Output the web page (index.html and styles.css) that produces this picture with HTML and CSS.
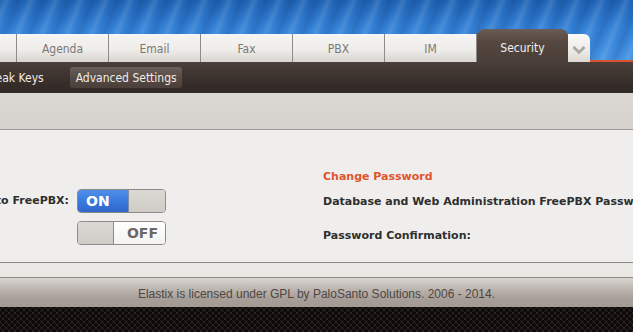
FILE: index.html
```html
<!DOCTYPE html>
<html>
<head>
<meta charset="utf-8">
<link rel="stylesheet" href="styles.css">
</head>
<body>
<div class="page">
  <div class="top">
    <div class="tab tab-cut"></div>
    <div class="tab">Agenda</div>
    <div class="tab">Email</div>
    <div class="tab">Fax</div>
    <div class="tab">PBX</div>
    <div class="tab">IM</div>
    <div class="tab tab-active">Security</div>
    <div class="tab tab-more"><svg width="14" height="10" viewBox="0 0 14 10"><path d="M1.5 2 L7 7.5 L12.5 2" fill="none" stroke="#a9a6a2" stroke-width="2.6"/></svg></div>
    <div class="top-rest"></div>
  </div>
  <div class="submenu">
    <span class="sub-item sub-first">Break Keys</span>
    <span class="sub-item sub-active">Advanced Settings</span>
  </div>
  <div class="titlebar"></div>
  <div class="content">
    <div class="col-left">
      <div class="row row-on">
        <div class="label-box"><span class="label">Enable direct access to FreePBX:</span></div>
        <div class="toggle toggle-on"><span class="toggle-text">ON</span><span class="knob"></span></div>
      </div>
      <div class="row row-off">
        <div class="label-box"></div>
        <div class="toggle toggle-off"><span class="knob"></span><span class="toggle-text">OFF</span></div>
      </div>
    </div>
    <div class="col-right">
      <div class="section-title">Change Password</div>
      <div class="field">Database and Web Administration FreePBX Password:</div>
      <div class="field field-confirm">Password Confirmation:</div>
    </div>
  </div>
  <div class="strip"></div>
  <div class="footer">Elastix is licensed under GPL by PaloSanto Solutions. 2006 - 2014.</div>
  <div class="bottom"></div>
</div>
</body>
</html>
```

FILE: styles.css
```css
* { box-sizing: border-box; }
html, body { margin: 0; padding: 0; }
body { width: 633px; height: 332px; overflow: hidden; background: #2a2321; font-family: "DejaVu Sans Condensed", "DejaVu Sans", sans-serif; }
.page { width: 633px; overflow: hidden; }

.top {
  height: 62px;
  display: flex;
  align-items: flex-end;
  background:
    repeating-linear-gradient(112deg, rgba(255,255,255,0.00) 0px, rgba(255,255,255,0.12) 6px, rgba(255,255,255,0.00) 11px, rgba(0,0,40,0.10) 17px, rgba(255,255,255,0.00) 23px),
    linear-gradient(180deg, #1f62b4 0%, #3280d6 45%, #4493e4 100%);
}
.tab {
  flex: none;
  width: 92px;
  height: 28px;
  border-right: 1px solid #8e8b88;
  background: linear-gradient(180deg, #f6f5f3 0%, #efedea 55%, #d9d5d0 100%);
  color: #7a7875;
  font-size: 12px;
  display: flex;
  align-items: center;
  justify-content: center;
  padding-top: 2px;
}
.tab-cut { width: 17px; }
.tab-active {
  width: 91px;
  height: 33px;
  border-right: none;
  border-radius: 7px 7px 0 0;
  background: linear-gradient(180deg, #6a5d56 0%, #54473f 40%, #4a3e38 100%);
  color: #f2f0ee;
  font-size: 12px;
  padding-top: 5px;
}
.tab-more {
  width: 22px;
  border-right: none;
  border-radius: 0 6px 0 0;
  background: linear-gradient(180deg, #fbfaf9 0%, #ecebe8 60%, #dcd8d3 100%);
  padding-top: 4px;
}
.top-rest {
  flex: 1;
  height: 4px;
  border-bottom: 2px solid #d9532e;
}

.submenu {
  height: 31px;
  background: linear-gradient(180deg, #4a3f3a 0%, #3c322e 50%, #2f2724 100%);
  display: flex;
  align-items: center;
  gap: 26px;
  color: #f0ecea;
  font-size: 12px;
}
.sub-item { white-space: nowrap; }
.sub-first { margin-left: -16px; }
.sub-active {
  height: 21px;
  display: flex;
  align-items: center;
  padding: 0 5px 0 6px;
  border-radius: 3px;
  background: linear-gradient(180deg, #6b5f58 0%, #574b45 50%, #4a3f3a 100%);
}

.titlebar {
  height: 37px;
  background: linear-gradient(180deg, #dcd9d5 0%, #d5d2cd 100%);
  border-bottom: 1px solid #9c9893;
}

.content {
  height: 133px;
  background: #efeeec;
  border-bottom: 1px solid #8c8985;
  display: flex;
  font-family: "DejaVu Sans", sans-serif;
}
.col-left { flex: none; width: 323px; padding-top: 58px; }
.row { display: flex; align-items: center; height: 25px; }
.row-off { margin-top: 7px; }
.label-box {
  flex: none;
  width: 69px;
  display: flex;
  justify-content: flex-end;
  overflow: hidden;
  margin-right: 8px;
}
.label { white-space: nowrap; font-weight: bold; font-size: 11px; color: #2f2f2f; }
.toggle {
  flex: none;
  width: 89px;
  height: 24px;
  border: 1px solid #8d8a87;
  border-radius: 4px;
  display: flex;
  overflow: hidden;
  font-weight: bold;
  font-size: 14px;
}
.toggle-text { flex: 1; display: flex; align-items: center; }
.toggle-on .toggle-text {
  background: linear-gradient(180deg, #4f8fe8 0%, #3b7ade 50%, #2f67c8 100%);
  color: #fff;
  padding-left: 8px;
  border-right: 1px solid #7f8fa8;
}
.toggle-off .toggle-text {
  background: linear-gradient(180deg, #ffffff 0%, #f4f3f1 100%);
  color: #6b6865;
  justify-content: flex-end;
  padding-right: 7px;
}
.knob {
  width: 36px;
  background: linear-gradient(180deg, #dcd9d5 0%, #cfcbc6 100%);
}
.toggle-off .knob { border-right: 1px solid #8d8a87; }

.col-right { flex: 1; min-width: 0; padding-top: 40px; white-space: nowrap; overflow: hidden; }
.section-title { color: #e0552e; font-weight: bold; font-size: 11px; height: 14px; line-height: 14px; }
.field { color: #2f2f2f; font-weight: bold; font-size: 11px; height: 14px; line-height: 14px; margin-top: 11px; }
.field-confirm { margin-top: 20px; }

.strip {
  height: 15px;
  background: #ebe9e6;
  border-bottom: 1px solid #8e8b87;
}
.footer {
  height: 29px;
  background: linear-gradient(180deg, #d9d5d0 0%, #c2bcb6 30%, #a89f98 70%, #a39a93 100%);
  color: #4d4743;
  font-family: "Liberation Sans", sans-serif;
  font-size: 12px;
  text-align: center;
  padding-top: 9px;
}
.bottom {
  height: 30px;
  background-color: #2c2422;
  background-image:
    radial-gradient(circle at 3px 3px, #0d0a09 1.6px, transparent 2.2px),
    radial-gradient(circle at 3px 3px, #0d0a09 1.6px, transparent 2.2px);
  background-size: 6px 6px, 6px 6px;
  background-position: 0 0, 3px 3px;
}
```
